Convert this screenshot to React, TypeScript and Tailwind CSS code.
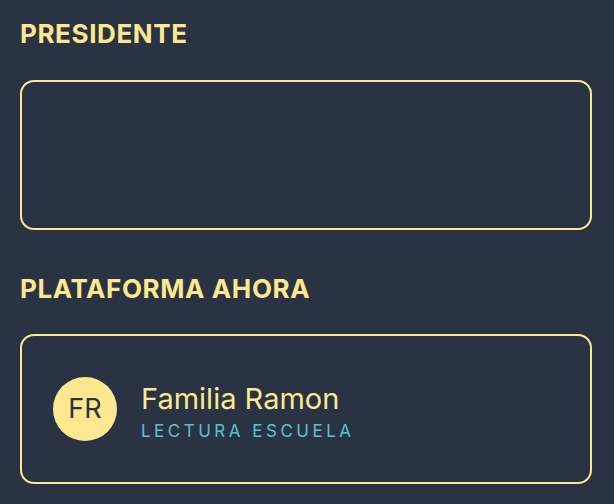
const App = () => {
  return (
    <div className="min-h-screen bg-[#2a3343] pl-5 pr-[22px] pt-[17px] font-['Inter','Noto_Sans',sans-serif]">
      <section>
        <h2 className="text-[26px] font-bold leading-[34px] tracking-[0.6px] text-[#fde88f]">PRESIDENTE</h2>
        <div className="mt-[29px] h-[150px] rounded-[14px] border-2 border-[#fde88f]"></div>
      </section>

      <section className="mt-[42px]">
        <h2 className="text-[26px] font-bold leading-[34px] tracking-[0.6px] text-[#fde88f]">PLATAFORMA AHORA</h2>
        <div className="mt-[28px] flex h-[150px] items-center gap-6 rounded-[14px] border-2 border-[#fde88f] px-[31px]">
          <div className="flex h-16 w-16 shrink-0 items-center justify-center rounded-full bg-[#fde88f] text-[27px] text-[#2a3343]">
            FR
          </div>
          <div className="mt-[5px] flex flex-col">
            <span className="text-[29px] leading-[34px] text-[#fde88f]">Familia Ramon</span>
            <span className="mt-[5px] text-[17px] leading-[20px] tracking-[3.5px] text-[#5bc3cb]">LECTURA ESCUELA</span>
          </div>
        </div>
      </section>
    </div>
  );
};

export default App;
